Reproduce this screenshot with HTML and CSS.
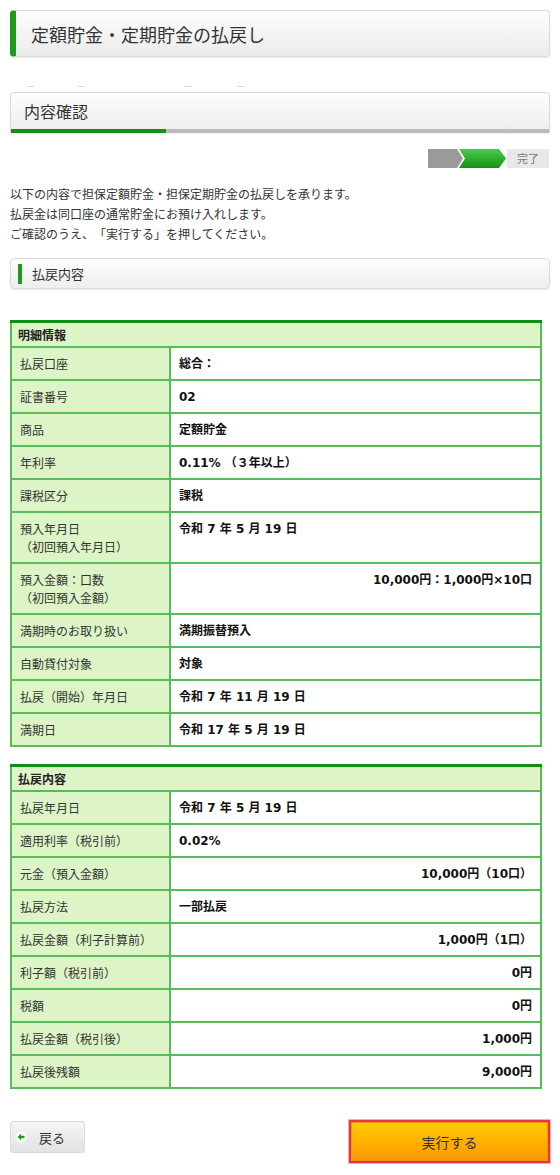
FILE: index.html
```html
<!DOCTYPE html>
<html lang="ja">
<head>
<meta charset="utf-8">
<title>定額貯金・定期貯金の払戻し</title>
<link rel="stylesheet" href="styles.css">
</head>
<body>
<div class="page">
  <div class="title-box">定額貯金・定期貯金の払戻し</div>

  <div class="crumbs"><span class="dash d1"></span><span class="dash d2"></span><span class="dash d3"></span><span class="dash d4"></span></div>

  <div class="step-box">
    <div class="step-title">内容確認</div>
    <div class="progress"><div class="progress-fill"></div></div>
  </div>

  <div class="steps">
    <div class="st st-done"></div>
    <div class="st st-cur"></div>
    <div class="st st-next">完了</div>
  </div>

  <p class="lead">以下の内容で担保定額貯金・担保定期貯金の払戻しを承ります。<br>払戻金は同口座の通常貯金にお預け入れします。<br>ご確認のうえ、「実行する」を押してください。</p>

  <div class="sec-head">払戻内容</div>

  <table class="detail first">
    <tr><th colspan="2" class="head">明細情報</th></tr>
    <tr><th>払戻口座</th><td>総合：</td></tr>
    <tr><th>証書番号</th><td>02</td></tr>
    <tr><th>商品</th><td>定額貯金</td></tr>
    <tr><th>年利率</th><td>0.11% （３年以上）</td></tr>
    <tr><th>課税区分</th><td>課税</td></tr>
    <tr><th>預入年月日<br>（初回預入年月日）</th><td>令和 7 年 5 月 19 日</td></tr>
    <tr><th>預入金額：口数<br>（初回預入金額）</th><td class="r">10,000円：1,000円×10口</td></tr>
    <tr><th>満期時のお取り扱い</th><td>満期振替預入</td></tr>
    <tr><th>自動貸付対象</th><td>対象</td></tr>
    <tr><th>払戻（開始）年月日</th><td>令和 7 年 11 月 19 日</td></tr>
    <tr><th>満期日</th><td>令和 17 年 5 月 19 日</td></tr>
  </table>

  <table class="detail second">
    <tr><th colspan="2" class="head">払戻内容</th></tr>
    <tr><th>払戻年月日</th><td>令和 7 年 5 月 19 日</td></tr>
    <tr><th>適用利率（税引前）</th><td>0.02%</td></tr>
    <tr><th>元金（預入金額）</th><td class="r">10,000円（10口）</td></tr>
    <tr><th>払戻方法</th><td>一部払戻</td></tr>
    <tr><th>払戻金額（利子計算前）</th><td class="r">1,000円（1口）</td></tr>
    <tr><th>利子額（税引前）</th><td class="r">0円</td></tr>
    <tr><th>税額</th><td class="r">0円</td></tr>
    <tr><th>払戻金額（税引後）</th><td class="r">1,000円</td></tr>
    <tr><th>払戻後残額</th><td class="r">9,000円</td></tr>
  </table>

  <div class="actions">
    <button class="btn-back" type="button"><svg class="back-icon" width="12" height="12" viewBox="0 0 12 12"><circle cx="6" cy="6" r="5.5" fill="#fff"/><polygon points="2.5,6 6,2.8 6,4.8 9.5,4.8 9.5,7.2 6,7.2 6,9.2" fill="#1f9a1f"/></svg><span>戻る</span></button>
    <button class="btn-exec" type="button">実行する</button>
  </div>
</div>
</body>
</html>
```

FILE: styles.css
```css
html, body {
  margin: 0;
  padding: 0;
  background: #fff;
}
body {
  font-family: "Noto Sans CJK JP", "Noto Sans", sans-serif;
  color: #333;
  text-spacing-trim: space-all;
}
.page {
  padding: 10px 10px 0;
}

.title-box {
  height: 47px;
  box-sizing: border-box;
  border: 1px solid #dcdcdc;
  border-left: 6px solid #1d9a1d;
  border-radius: 4px;
  background: linear-gradient(#fdfdfd, #ebebeb);
  box-shadow: 0 1px 2px rgba(0, 0, 0, 0.1);
  display: flex;
  align-items: center;
  padding-left: 15px;
  font-size: 18px;
  color: #333;
}

.crumbs {
  margin-top: 29px;
  height: 2px;
  display: flex;
}
.dash {
  display: block;
  width: 7px;
  height: 1px;
  background: #d8d8d8;
}
.d1 { margin-left: 17px; }
.d2 { margin-left: 44px; }
.d3 { margin-left: 100px; }
.d4 { margin-left: 45px; }

.step-box {
  margin-top: 4px;
  height: 41px;
  box-sizing: border-box;
  border: 1px solid #dcdcdc;
  border-bottom: none;
  border-radius: 4px 4px 0 0;
  background: linear-gradient(#fdfdfd, #ececec);
  box-shadow: 0 1px 2px rgba(0, 0, 0, 0.08);
  display: flex;
  flex-direction: column;
}
.step-title {
  flex: 1;
  display: flex;
  align-items: center;
  padding-left: 13px;
  font-size: 16px;
  color: #333;
}
.progress {
  height: 4px;
  background: #bcbcbc;
}
.progress-fill {
  width: 155px;
  height: 100%;
  background: #149014;
}

.steps {
  margin-top: 16px;
  height: 19px;
  display: flex;
  justify-content: flex-end;
  padding-right: 1px;
}
.st {
  height: 19px;
}
.st-done {
  width: 35px;
  background: #9a9a9a;
  clip-path: polygon(0 0, 29px 0, 35px 50%, 29px 100%, 0 100%);
}
.st-cur {
  width: 47px;
  margin-left: -4px;
  background: linear-gradient(#4ccc4c, #139313);
  clip-path: polygon(0 0, 40px 0, 47px 50%, 40px 100%, 0 100%, 6px 50%);
}
.st-next {
  width: 42px;
  margin-left: 1px;
  background: #e8e8e8;
  color: #777;
  font-size: 11px;
  line-height: 19px;
  text-align: center;
}

.lead {
  margin: 16px 0 0;
  font-size: 12px;
  line-height: 20px;
  color: #333;
}

.sec-head {
  margin-top: 14px;
  height: 31px;
  box-sizing: border-box;
  border: 1px solid #dcdcdc;
  border-radius: 4px;
  background: linear-gradient(#fdfdfd, #eeeeee);
  box-shadow: 0 1px 2px rgba(0, 0, 0, 0.08);
  display: flex;
  align-items: center;
  padding-left: 7px;
  font-size: 13px;
  color: #333;
}
.sec-head::before {
  content: "";
  display: block;
  width: 4px;
  height: 20px;
  background: #1d9a1d;
  margin-right: 10px;
}

.detail {
  width: 532px;
  border-collapse: collapse;
  font-size: 12px;
  line-height: 18px;
}
.detail.first { margin-top: 31px; }
.detail.second { margin-top: 17px; }
.detail th,
.detail td {
  border: 2px solid #58bd58;
  vertical-align: top;
  padding: 7px 8px 6px;
}
.detail th {
  width: 141px;
  background: #ddf5c6;
  text-align: left;
  font-weight: normal;
  color: #333;
}
.detail td {
  background: #fff;
  font-family: "DejaVu Sans", "Noto Sans CJK JP", sans-serif;
  font-weight: bold;
  color: #111;
}
.detail td.r {
  text-align: right;
}
.detail th.head {
  border-top: 3px solid #118f11;
  font-weight: bold;
  color: #222;
  padding: 3px 6px 2px;
}

.actions {
  margin-top: 31px;
  display: flex;
  justify-content: space-between;
  align-items: flex-start;
  padding-bottom: 6px;
}
.btn-back {
  width: 75px;
  height: 32px;
  margin-top: 1px;
  box-sizing: border-box;
  border: 1px solid #dadada;
  border-radius: 3px;
  background: linear-gradient(#f5f5f5, #e2e2e2);
  display: flex;
  align-items: center;
  padding: 0 0 0 4px;
  font-family: "Noto Sans CJK JP", sans-serif;
  font-size: 13px;
  color: #333;
}
.back-icon {
  display: block;
  margin-right: 12px;
}
.btn-exec {
  width: 201px;
  height: 43px;
  box-sizing: border-box;
  border: 2px solid #ee3340;
  outline: 1px solid #f6b0b4;
  background: linear-gradient(#ffcc00, #ff9600);
  box-shadow: inset 0 0 0 1px #e89a10;
  font-family: "Noto Sans CJK JP", sans-serif;
  font-size: 14px;
  color: #333;
  padding: 0;
}
```
